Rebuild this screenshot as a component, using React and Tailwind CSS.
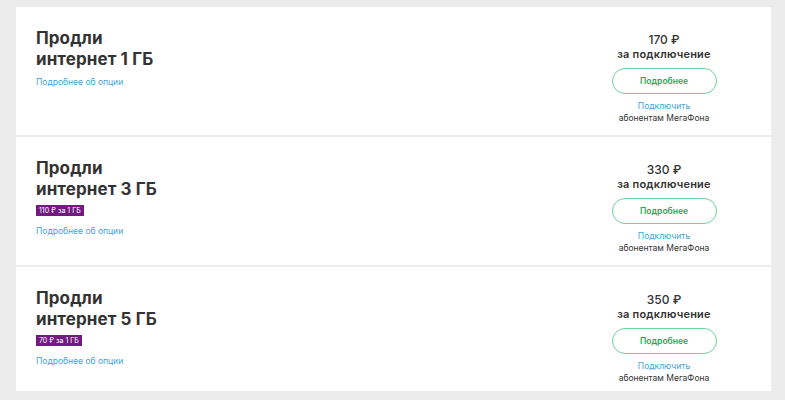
const options = [
  { id: 1, gb: "1 ГБ", price: "170 ₽", badge: null, h: "h-[128px]" },
  { id: 2, gb: "3 ГБ", price: "330 ₽", badge: "110 ₽ за 1 ГБ", h: "h-[128px]" },
  { id: 3, gb: "5 ГБ", price: "350 ₽", badge: "70 ₽ за 1 ГБ", h: "h-[124px]" },
];

const OptionCard = ({ option }) => (
  <div className={`bg-white flex justify-between ${option.h}`}>
    <div className="pl-[20px] pt-[21px]">
      <h2 className="text-[17px] leading-[21px] font-bold text-[#333] tracking-[0.1px]">
        Продли
        <br />
        интернет {option.gb}
      </h2>
      {option.badge && (
        <div className="mt-[5px] w-fit bg-[#731982] text-white text-[7px] leading-[11px] px-[3px]">
          {option.badge}
        </div>
      )}
      <a className={`block text-[8.5px] text-[#3fa1e0] leading-[12px] ${option.badge ? "mt-[9px]" : "mt-[6px]"}`}>
        Подробнее об опции
      </a>
    </div>
    <div className="w-[140px] mr-[37px] pt-[25px] flex flex-col items-center">
      <div className="text-[12px] leading-[15px] font-medium text-[#333]">{option.price}</div>
      <div className="text-[11px] leading-[15px] font-semibold text-[#333] tracking-[0.2px]">
        за подключение
      </div>
      <button className="mt-[6px] w-[105px] h-[26px] rounded-full border border-[#6fcf9d] text-[#1eaa55] text-[8.5px] font-semibold">
        Подробнее
      </button>
      <a className="mt-[6px] text-[8.5px] leading-[12px] text-[#3fa1e0]">Подключить</a>
      <div className="text-[8.5px] leading-[12px] text-[#333]">абонентам МегаФона</div>
    </div>
  </div>
);

const App = () => {
  return (
    <div
      className="h-[400px] w-[785px] bg-[#ececec] pt-[7px] pl-[16px] pr-[14px] flex flex-col gap-[2px] overflow-hidden"
      style={{ fontFamily: "Inter, 'Noto Sans', sans-serif" }}
    >
      {options.map((option) => (
        <OptionCard key={option.id} option={option} />
      ))}
    </div>
  );
};

export default App;
